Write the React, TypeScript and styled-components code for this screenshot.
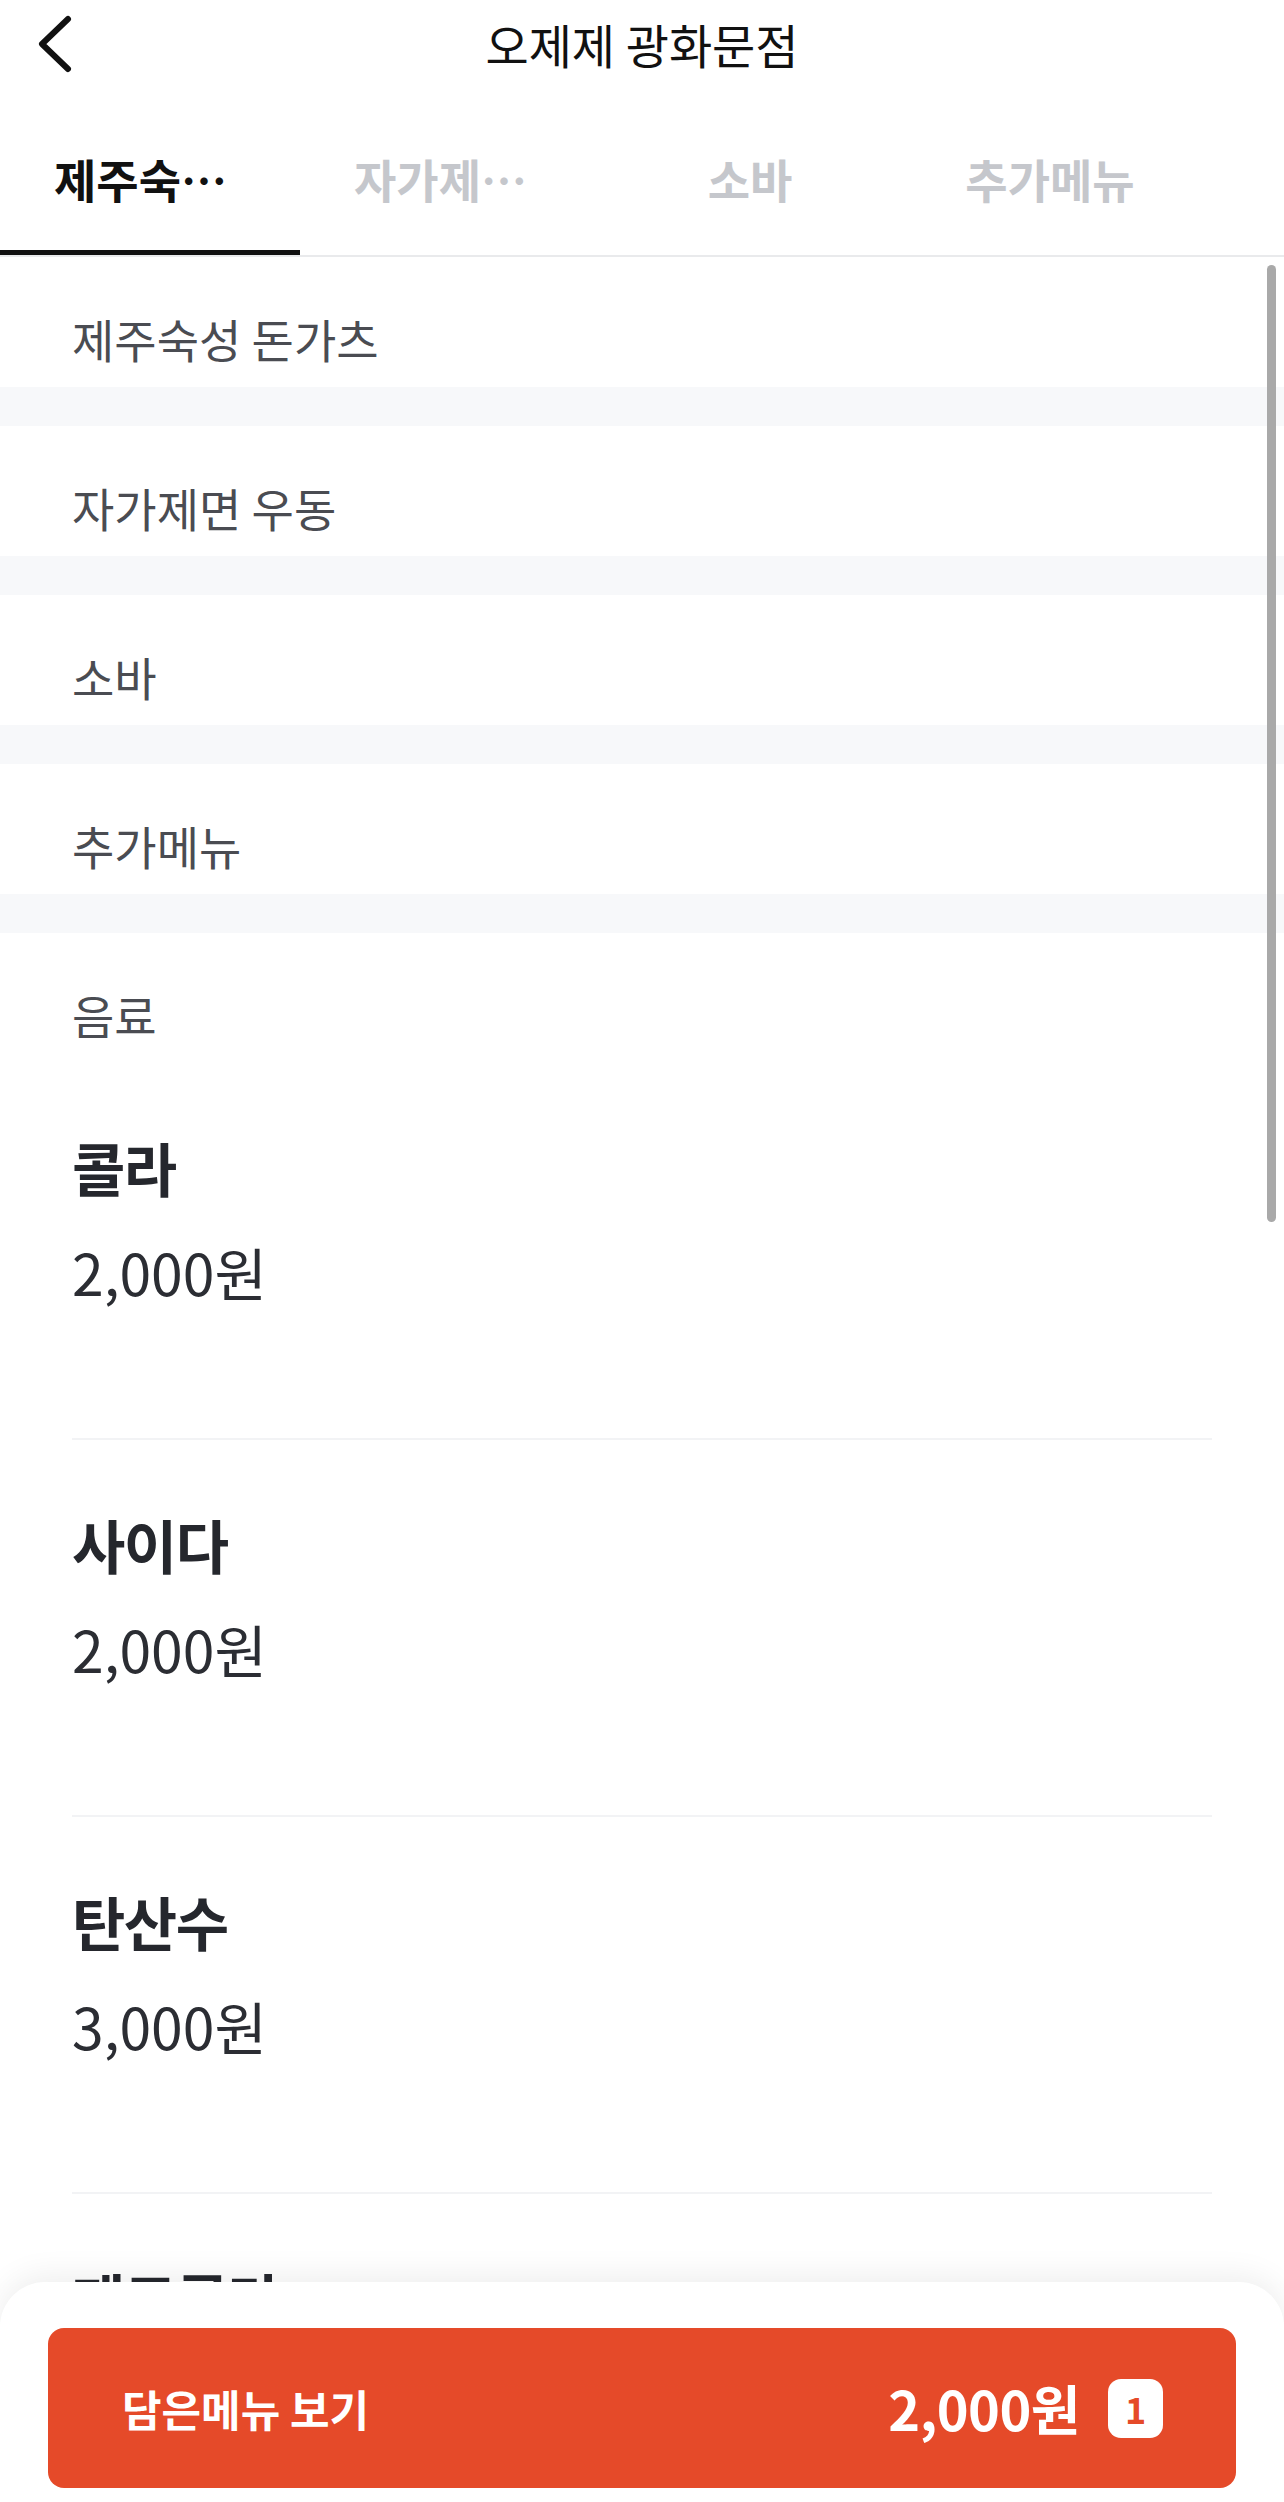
import React from "react";
import styled, { createGlobalStyle } from "styled-components";

const GlobalStyle = createGlobalStyle`
  html, body {
    margin: 0;
    padding: 0;
    background: #ffffff;
  }
  body {
    font-family: "Noto Sans CJK KR", "Noto Sans", sans-serif;
    -webkit-font-smoothing: antialiased;
  }
  * { box-sizing: border-box; }
`;

const Page = styled.div`
  position: relative;
  width: 100%;
  height: 100vh;
  overflow: hidden;
  display: flex;
  flex-direction: column;
  background: #ffffff;
`;

const Header = styled.header`
  flex: 0 0 88px;
  display: grid;
  grid-template-columns: 120px 1fr 120px;
  align-items: center;
`;

const BackButton = styled.button`
  display: flex;
  align-items: center;
  justify-content: flex-start;
  padding: 0 0 0 36px;
  height: 88px;
  border: none;
  background: transparent;
  cursor: pointer;
`;

const Title = styled.h1`
  margin: 0;
  text-align: center;
  font-size: 47px;
  line-height: 64px;
  font-weight: 400;
  color: #111111;
`;

const TabBar = styled.nav`
  flex: 0 0 auto;
  display: flex;
  overflow: hidden;
  border-bottom: 2px solid #e9eaec;
`;

const Tab = styled.div<{ $active?: boolean }>`
  flex: 0 0 300px;
  height: 167px;
  padding-top: 57px;
  display: flex;
  justify-content: center;
  border-bottom: 5px solid ${(p) => (p.$active ? "#111111" : "transparent")};
`;

const TabLabel = styled.span<{ $active?: boolean }>`
  display: block;
  max-width: 192px;
  white-space: nowrap;
  overflow: hidden;
  text-overflow: ellipsis;
  font-size: 46px;
  line-height: 66px;
  font-weight: 700;
  letter-spacing: 0;
  color: ${(p) => (p.$active ? "#111111" : "#c5c7cc")};
`;

const Content = styled.main`
  position: relative;
  flex: 1 1 auto;
  overflow: hidden;
`;

const Section = styled.section``;

const SectionHeader = styled.h2`
  margin: 0;
  padding: 48px 72px 16px;
  font-size: 46px;
  line-height: 66px;
  font-weight: 400;
  letter-spacing: 0;
  color: #4a4c52;
`;

const SectionGap = styled.div`
  height: 39px;
  background: #f7f8fa;
`;

const ItemList = styled.ul`
  list-style: none;
  margin: 0;
  padding: 0 72px;
`;

const Item = styled.li`
  padding: 69px 0 134px;
  border-bottom: 2px solid #f2f3f5;
`;

const ItemName = styled.div`
  font-size: 58px;
  line-height: 70px;
  font-weight: 700;
  letter-spacing: -1.5px;
  color: #25272d;
`;

const ItemPrice = styled.div`
  margin-top: 36px;
  font-size: 57px;
  line-height: 66px;
  font-weight: 400;
  letter-spacing: 0;
  color: #2b2d33;
`;

const ScrollIndicator = styled.div`
  position: absolute;
  top: 8px;
  right: 8px;
  width: 9px;
  height: 957px;
  border-radius: 5px;
  background: #a9a9a9;
`;

const BottomSheet = styled.div`
  position: absolute;
  left: 0;
  right: 0;
  bottom: 0;
  height: 220px;
  padding: 46px 48px 14px;
  background: #ffffff;
  border-radius: 45px 45px 0 0;
  box-shadow: 0 -6px 32px rgba(0, 0, 0, 0.07);
`;

const CartButton = styled.button`
  width: 100%;
  height: 160px;
  padding: 0 73px 0 74px;
  display: flex;
  align-items: center;
  justify-content: space-between;
  border: none;
  border-radius: 16px;
  background: #e54a29;
  color: #ffffff;
  font-family: inherit;
  cursor: pointer;
`;

const CartLabel = styled.span`
  font-size: 43px;
  line-height: 64px;
  font-weight: 700;
`;

const CartRight = styled.span`
  display: flex;
  align-items: center;
  gap: 28px;
`;

const CartTotal = styled.span`
  font-size: 54px;
  line-height: 66px;
  font-weight: 700;
  letter-spacing: -0.5px;
`;

const CountBadge = styled.span`
  display: flex;
  align-items: center;
  justify-content: center;
  width: 55px;
  height: 59px;
  border-radius: 13px;
  background: #ffffff;
  color: #e54a29;
  font-size: 36px;
  line-height: 1;
  font-weight: 700;
`;

type MenuItem = { name: string; price: string };
type Category = { name: string; items: MenuItem[] };

const categories: Category[] = [
  { name: "제주숙성 돈가츠", items: [] },
  { name: "자가제면 우동", items: [] },
  { name: "소바", items: [] },
  { name: "추가메뉴", items: [] },
  {
    name: "음료",
    items: [
      { name: "콜라", price: "2,000원" },
      { name: "사이다", price: "2,000원" },
      { name: "탄산수", price: "3,000원" },
      { name: "제로콜라", price: "2,000원" },
    ],
  },
];

function ChevronLeft() {
  return (
    <svg width="40" height="60" viewBox="0 0 40 60" fill="none">
      <path
        d="M32 5 L6 30 L32 55"
        stroke="#111111"
        strokeWidth="6"
        strokeLinecap="round"
        strokeLinejoin="round"
      />
    </svg>
  );
}

export default function App() {
  return (
    <>
      <GlobalStyle />
      <Page>
        <Header>
          <BackButton aria-label="뒤로">
            <ChevronLeft />
          </BackButton>
          <Title>오제제 광화문점</Title>
          <div />
        </Header>

        <TabBar>
          {categories.map((c, i) => (
            <Tab key={c.name} $active={i === 0}>
              <TabLabel $active={i === 0}>{c.name}</TabLabel>
            </Tab>
          ))}
        </TabBar>

        <Content>
          {categories.map((c, i) => (
            <Section key={c.name}>
              <SectionHeader>{c.name}</SectionHeader>
              {c.items.length > 0 && (
                <ItemList>
                  {c.items.map((it) => (
                    <Item key={it.name}>
                      <ItemName>{it.name}</ItemName>
                      <ItemPrice>{it.price}</ItemPrice>
                    </Item>
                  ))}
                </ItemList>
              )}
              {i < categories.length - 1 && <SectionGap />}
            </Section>
          ))}
          <ScrollIndicator />
        </Content>

        <BottomSheet>
          <CartButton>
            <CartLabel>담은메뉴 보기</CartLabel>
            <CartRight>
              <CartTotal>2,000원</CartTotal>
              <CountBadge>1</CountBadge>
            </CartRight>
          </CartButton>
        </BottomSheet>
      </Page>
    </>
  );
}
